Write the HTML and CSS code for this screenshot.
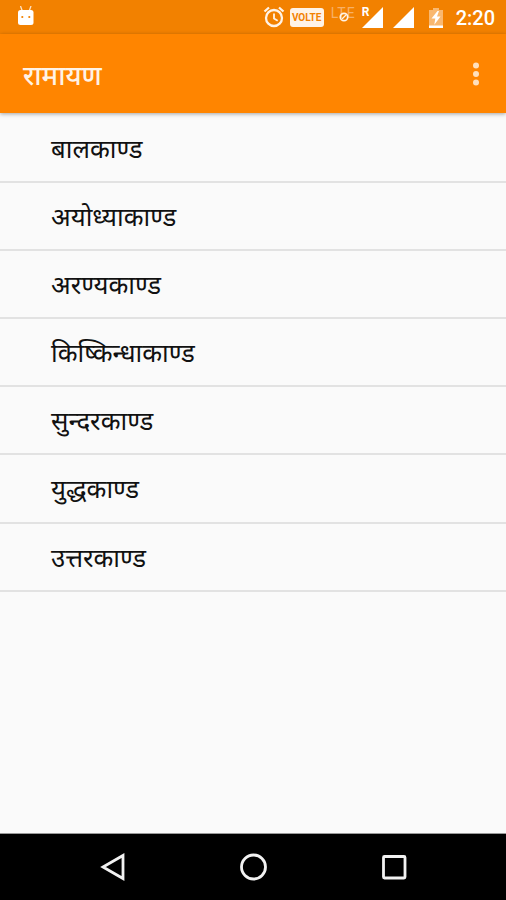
FILE: index.html
```html
<!DOCTYPE html>
<html lang="hi">
<head>
  <meta charset="UTF-8" />
  <meta name="viewport" content="width=device-width, initial-scale=1.0"/>
  <title>रामायण</title>
  <link rel="stylesheet" href="styles.css">
</head>
<body>

  <div class="status-bar">
    <svg class="icon-robot" width="18" height="20" viewBox="0 0 18 20">
      <path d="M3.500 0l1.800 5M14 0l-1.800 5" stroke="#ffe3c4" stroke-width="1.300" fill="none"/>
      <rect x="1" y="4" width="15.500" height="15" rx="2.500" fill="#fff"/>
      <circle cx="5.300" cy="11" r="1.100" fill="#f28100"/>
      <circle cx="12.300" cy="11" r="1.100" fill="#f28100"/>
    </svg>

    <svg class="icon-alarm" width="22" height="22" viewBox="0 0 22 22" fill="none" stroke="#fff3e6">
      <circle cx="11" cy="12" r="8" stroke-width="2.300"/>
      <path d="M1.500 5.500l4.500-4M20.500 5.500l-4.500-4" stroke-width="2.300"/>
      <path d="M11 7.500v5l3.700 2.200" stroke-width="1.800"/>
    </svg>
    <span class="volte">VOLTE</span>
    <div class="lte">
      <span class="lte-text">LTE</span>
      <svg class="lte-off" width="10" height="10" viewBox="0 0 10 10">
        <circle cx="5" cy="5" r="3.700" fill="none" stroke="#fff3e6" stroke-width="1.700"/>
        <path d="M3 7l4-4" stroke="#fff3e6" stroke-width="1.300"/>
      </svg>
    </div>
    <div class="signal">
      <span class="roaming">R</span>
      <svg width="21" height="21" viewBox="0 0 21 21"><path d="M21 0v21H0z" fill="#fff"/></svg>
    </div>
    <svg class="signal-two" width="21" height="21" viewBox="0 0 21 21"><path d="M21 0v21H0z" fill="#fff"/></svg>
    <svg class="icon-battery" width="14" height="20" viewBox="0 0 14 20">
      <path d="M0 2h4V0h6v2h4v18H0z" fill="#f9b870"/>
      <path d="M0 17.500h14V20H0z" fill="#fff"/>
      <path d="M8.500 3L2.500 10.500h3.800l-1 6.200L11.500 8.500H8l2-5.500z" fill="#fff"/>
    </svg>
    <span class="clock">2:20</span>
  </div>

  <header>
    <h1>रामायण</h1>
    <svg class="menu" width="8" height="24" viewBox="0 0 8 24" fill="#ffe0bd">
      <circle cx="4" cy="3.500" r="3"/>
      <circle cx="4" cy="12" r="3"/>
      <circle cx="4" cy="20.500" r="3"/>
    </svg>
  </header>

  <ul class="chapters">
    <li>बालकाण्ड</li>
    <li>अयोध्याकाण्ड</li>
    <li>अरण्यकाण्ड</li>
    <li>किष्किन्धाकाण्ड</li>
    <li>सुन्दरकाण्ड</li>
    <li>युद्धकाण्ड</li>
    <li>उत्तरकाण्ड</li>
  </ul>

  <nav class="nav-bar">
    <svg width="28" height="30" viewBox="0 0 28 30"><path d="M24 3.500v23L4 15z"/></svg>
    <svg width="28" height="30" viewBox="0 0 28 30"><circle cx="14.500" cy="15" r="12"/></svg>
    <svg width="28" height="30" viewBox="0 0 28 30"><rect x="4.500" y="4.500" width="21.500" height="21.500" rx="1"/></svg>
  </nav>

</body>
</html>
```

FILE: styles.css
```css
:root {
  --status-color: #f28100;
  --bar-color: #ff8500;
  --page-color: #fafafa;
  --line-color: #e2e2e2;
}

* {
  box-sizing: border-box;
}

body {
  margin: 0;
  height: 100vh;
  display: flex;
  flex-direction: column;
  overflow: hidden;
  background-color: var(--page-color);
  color: #111;
  font-family: "Noto Sans Devanagari", "Noto Sans", Roboto, sans-serif;
}

svg {
  display: block;
  flex: none;
}

.status-bar {
  height: 34px;
  flex: none;
  display: flex;
  align-items: center;
  padding: 1px 11px 0 17px;
  background-color: var(--status-color);
  color: #fff;
  font-family: Roboto, sans-serif;
}

.icon-robot {
  margin: 0 auto 3px 0;
}

.icon-alarm {
  margin-bottom: 1px;
}

.volte {
  width: 34px;
  height: 19px;
  margin-left: 5px;
  border-radius: 3px;
  background: #fff3e6;
  color: var(--status-color);
  font-size: 10px;
  font-weight: 700;
  line-height: 19px;
  text-align: center;
}

.lte {
  position: relative;
  width: 26px;
  height: 20px;
  margin-left: 7px;
}

.lte-text {
  display: block;
  color: #f8b066;
  font-size: 14px;
  line-height: 11px;
  letter-spacing: 1px;
}

.lte-off {
  position: absolute;
  left: 8px;
  top: 4px;
}

.signal {
  position: relative;
  margin-left: 5px;
}

.roaming {
  position: absolute;
  left: 0;
  top: 0;
  font-size: 12px;
  font-weight: 700;
  line-height: 11px;
}

.signal-two {
  margin-left: 10px;
}

.icon-battery {
  margin-left: 15px;
}

.clock {
  margin-left: 13px;
  font-size: 20px;
  font-weight: 500;
}

header {
  height: 79px;
  flex: none;
  display: flex;
  align-items: center;
  justify-content: space-between;
  padding: 0 26px 0 23px;
  background-color: var(--bar-color);
  box-shadow: 0 1px 4px rgba(0, 0, 0, 0.35);
}

h1 {
  margin: 0;
  padding-top: 9px;
  color: #fff3e6;
  font-size: 27px;
  font-weight: 500;
}

.chapters {
  margin: 1.5px 0 0;
  padding: 0;
  list-style: none;
  flex: 1;
}

.chapters li {
  height: 68.2px;
  padding: 4px 0 0 51px;
  border-bottom: 2px solid var(--line-color);
  font-size: 25.8px;
  line-height: 66px;
}

.nav-bar {
  height: 67px;
  flex: none;
  display: flex;
  align-items: center;
  justify-content: center;
  gap: 112px;
  border-top: 1px solid #999;
  background: #000;
}

.nav-bar svg {
  fill: none;
  stroke: #f2f2f2;
  stroke-width: 2.8;
}
```
